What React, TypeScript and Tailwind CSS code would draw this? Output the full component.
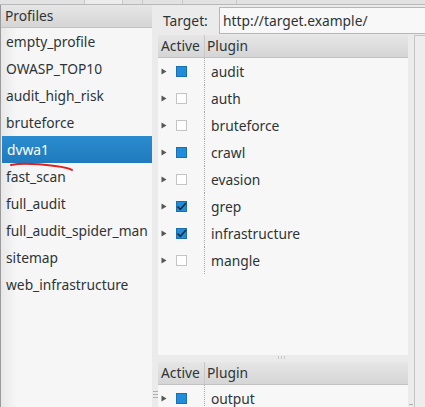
import React from "react";

const profiles = [
  "empty_profile",
  "OWASP_TOP10",
  "audit_high_risk",
  "bruteforce",
  "dvwa1",
  "fast_scan",
  "full_audit",
  "full_audit_spider_man",
  "sitemap",
  "web_infrastructure",
];

type State = "full" | "none" | "check";
const plugins: { name: string; state: State }[] = [
  { name: "audit", state: "full" },
  { name: "auth", state: "none" },
  { name: "bruteforce", state: "none" },
  { name: "crawl", state: "full" },
  { name: "evasion", state: "none" },
  { name: "grep", state: "check" },
  { name: "infrastructure", state: "check" },
  { name: "mangle", state: "none" },
];

function Box({ state }: { state: State }) {
  if (state === "none")
    return <div className="w-[11px] h-[11px] border border-[#c4c4c4] bg-white" />;
  if (state === "full")
    return <div className="w-[11px] h-[11px] border border-[#1b6fae] bg-[#1f8ddb]" />;
  return (
    <div className="w-[11px] h-[11px] border border-[#1b6fae] bg-[#1f8ddb] relative">
      <svg width="11" height="11" viewBox="0 0 11 11" className="absolute left-[-1px] top-[-1px]">
        <path d="M1.5 5.5 L4.3 8.3 L10 2" stroke="#1e2a33" strokeWidth="1.6" fill="none" />
      </svg>
    </div>
  );
}

function Tri() {
  return (
    <svg width="6" height="7" viewBox="0 0 6 7" className="shrink-0">
      <path d="M0.5 0.5 L5.5 3.5 L0.5 6.5 Z" fill="#555753" />
    </svg>
  );
}

function Header() {
  return (
    <div className="flex h-[23px] shrink-0 bg-gradient-to-b from-[#e6e6e6] to-[#d5d5d5] border-b border-[#c2c2c2] text-[#2e3436]">
      <div className="w-[47px] shrink-0 pl-[3px] flex items-center border-r border-[#c8c8c8]">Active</div>
      <div className="flex-1 pl-[2px] flex items-center">Plugin</div>
    </div>
  );
}

function Row({ name, state }: { name: string; state: State }) {
  return (
    <div className="flex h-[27px] items-center">
      <div className="w-[46px] shrink-0 flex items-center pl-[3px] h-full">
        <Tri />
        <div className="ml-[9px]"><Box state={state} /></div>
      </div>
      <div className="h-full border-l border-dotted border-[#a8a8a8]" />
      <div className="pl-[6px]">{name}</div>
    </div>
  );
}

export default function App() {
  return (
    <div
      className="w-[425px] h-[407px] overflow-hidden bg-[#ebebeb] text-[#2e3436] text-[13.8px] leading-none flex flex-col"
      style={{ fontFamily: '"Noto Sans", "DejaVu Sans", sans-serif' }}
    >
      {/* top strip */}
      <div className="h-[5px] shrink-0 flex bg-[#e2e2e2] border-b border-[#b8b8b8]">
        <div className="w-[85px] border-r border-[#c8c8c8]" />
        <div className="w-[38px] bg-[#ececec] border-r border-[#c8c8c8]" />
        <div className="w-[20px] border-r border-[#c8c8c8]" />
        <div className="w-[40px] border-r border-[#c8c8c8]" />
        <div className="w-[54px] border-r border-[#c8c8c8]" />
        <div className="flex-1" />
      </div>
      <div className="flex flex-1 min-h-0">
        {/* left pane */}
        <div className="w-[152px] shrink-0 flex flex-col border-l border-[#9a9a9a]">
          <div className="h-[23px] shrink-0 flex items-center pl-[4px] bg-gradient-to-b from-[#e6e6e6] to-[#d5d5d5] border-b border-[#c2c2c2]">
            Profiles
          </div>
          <div className="flex-1 bg-gradient-to-r from-[#e8e8e8] via-[#f6f6f6] via-[10%] to-[#f6f6f6] relative">
            {profiles.map((p) => (
              <div
                key={p}
                className={
                  "h-[27px] flex items-center pl-[5px] " +
                  (p === "dvwa1" ? "bg-gradient-to-b from-[#2a8ccf] to-[#1f7bbd] text-white ml-[1px]" : "")
                }
              >
                {p}
              </div>
            ))}
            <svg className="absolute left-[8px] top-[134px]" width="66" height="12" viewBox="0 0 66 12">
              <path d="M2 3 C 12 1, 30 2, 46 4 C 54 5, 60 6, 63 8" stroke="#e0201c" strokeWidth="2" fill="none" strokeLinecap="round" />
            </svg>
          </div>
        </div>
        {/* gutter */}
        <div className="w-[6px] shrink-0 flex flex-col justify-end items-center pb-[9px]">
          <div className="flex flex-col gap-[2px]">
            <div className="w-[5px] h-px bg-[#b0b0b0]" />
            <div className="w-[5px] h-px bg-[#b0b0b0]" />
            <div className="w-[5px] h-px bg-[#b0b0b0]" />
          </div>
        </div>
        {/* right pane */}
        <div className="flex-1 flex flex-col min-w-0">
          <div className="h-[30px] shrink-0 flex items-center">
            <div className="w-[61px] shrink-0 pl-[5px] pt-[1px]">Target:</div>
            <div className="flex-1 h-[27px] mt-[1px] border border-[#b6b6b6] border-r-0 bg-[#f8f8f8] flex items-center pl-[3px]">
              http://target.example/
            </div>
          </div>
          <div className="flex flex-1 min-h-0">
            <div className="w-[250px] shrink-0 flex flex-col">
              <div className="h-[320px] shrink-0 flex flex-col bg-[#f7f7f7]">
                <Header />
                {plugins.map((p) => (
                  <Row key={p.name} name={p.name} state={p.state} />
                ))}
              </div>
              <div className="h-[7px] shrink-0 flex justify-center items-start pt-[1px]">
                <div className="flex gap-[2px] mr-[4px]">
                  <div className="w-px h-[3px] bg-[#c8c8c8]" />
                  <div className="w-px h-[3px] bg-[#c8c8c8]" />
                  <div className="w-px h-[3px] bg-[#c8c8c8]" />
                </div>
              </div>
              <div className="flex-1 flex flex-col bg-[#f7f7f7]">
                <Header />
                <Row name="output" state="full" />
              </div>
            </div>
            <div className="w-[6px] shrink-0 flex flex-col justify-end items-center pb-[2px]">
              <div className="w-[4px] h-px bg-[#b0b0b0]" />
            </div>
            <div className="flex-1 bg-[#ededed] border-l border-t border-[#c4c4c4]" />
          </div>
        </div>
      </div>
    </div>
  );
}
